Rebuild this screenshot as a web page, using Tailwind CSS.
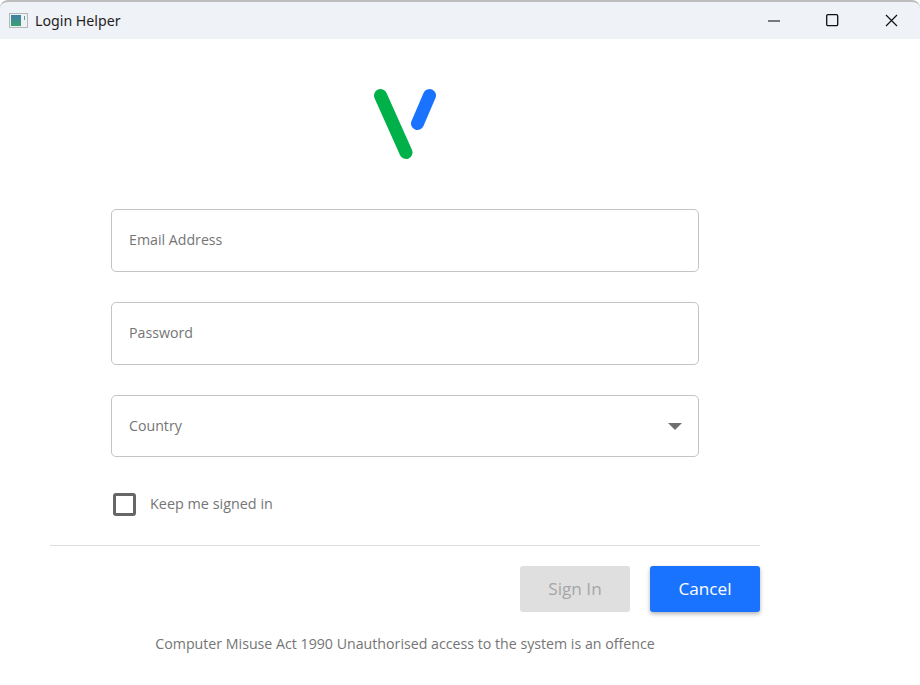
<!DOCTYPE html>
<html>
<head>
<meta charset="utf-8">
<script src="https://cdn.jsdelivr.net/npm/@tailwindcss/browser@4"></script>
</head>
<body class="bg-white font-['Open_Sans','Noto_Sans',sans-serif]">
<div class="w-[920px] h-[685px] overflow-hidden flex flex-col bg-white">
  <header class="h-[39px] shrink-0 flex items-center bg-[#eff2f7] border-t-2 border-[#bdbdbd] rounded-t-[8px] pl-[9px]">
    <svg width="19" height="15" viewBox="0 0 19 15" class="shrink-0">
      <defs><linearGradient id="g" x1="0" y1="0" x2="0" y2="1"><stop offset="0" stop-color="#3f7fa8"/><stop offset="1" stop-color="#3c9f72"/></linearGradient></defs>
      <rect x="0.5" y="0.5" width="18" height="14" fill="#eef1f4" stroke="#b4b8bc"/>
      <rect x="2" y="2" width="10" height="11" fill="url(#g)"/>
      <rect x="15" y="3" width="1" height="4" fill="#5aa09a"/>
    </svg>
    <span class="ml-[7px] pt-[2px] text-[14.2px] leading-none text-[#1f1f1f] font-['Noto_Sans',sans-serif]">Login Helper</span>
    <div class="ml-auto flex items-center h-full">
      <div class="w-[58px] flex justify-center">
        <svg width="12" height="2" viewBox="0 0 12 2"><path d="M0 1H12" stroke="#000" stroke-width="1"/></svg>
      </div>
      <div class="w-[59px] flex justify-center">
        <svg width="13" height="13" viewBox="0 0 13 13"><rect x="0.7" y="0.7" width="11" height="11" rx="1.2" fill="none" stroke="#111" stroke-width="1.3"/></svg>
      </div>
      <div class="w-[58px] flex justify-center">
        <svg width="13" height="13" viewBox="0 0 13 13"><path d="M1 1L12 12M12 1L1 12" stroke="#111" stroke-width="1.2"/></svg>
      </div>
    </div>
  </header>

  <main class="flex flex-col items-center w-[810px]">
    <svg width="64" height="72" viewBox="0 0 64 72" class="mt-[49px] shrink-0">
      <line x1="7.5" y1="7.5" x2="33" y2="64.5" stroke="#00b14a" stroke-width="13" stroke-linecap="round"/>
      <line x1="56.5" y1="7.5" x2="44.5" y2="35.5" stroke="#1a73ff" stroke-width="13" stroke-linecap="round"/>
    </svg>

    <div class="w-[588px] mt-[49px] flex flex-col gap-[30px] text-[14.2px] text-[#757575]">
      <div class="h-[63px] border border-[#c4c4c4] rounded-[5px] flex items-center px-[17px] pb-[2px]">Email Address</div>
      <div class="h-[63px] border border-[#c4c4c4] rounded-[5px] flex items-center px-[17px] pb-[2px]">Password</div>
      <div class="h-[62px] border border-[#c4c4c4] rounded-[5px] flex items-center justify-between pl-[17px] pr-[16px]">
        <span>Country</span>
        <svg width="14" height="7" viewBox="0 0 14 7"><path d="M0 0H14L7 7Z" fill="#707070"/></svg>
      </div>
    </div>

    <div class="w-[588px] mt-[35px] flex items-center text-[14.4px] text-[#757575] h-[24px]">
      <span class="ml-[2px] w-[23px] h-[23px] border-[3px] border-[#666] rounded-[3px] shrink-0"></span>
      <span class="ml-[14px]">Keep me signed in</span>
    </div>

    <div class="w-[710px] mt-[29px] border-t border-[#dedede]"></div>

    <div class="w-[710px] mt-[20px] flex justify-end gap-[20px] text-[17.2px]">
      <button class="w-[110px] h-[46px] rounded-[3px] bg-[#dfdfdf] text-[#a6a6a6]">Sign In</button>
      <button class="w-[110px] h-[46px] rounded-[3px] bg-[#1a73ff] text-white shadow-[0_2px_4px_rgba(0,0,0,0.3)]">Cancel</button>
    </div>

    <p class="mt-[22px] text-[14.2px] leading-5 text-[#757575] whitespace-nowrap">Computer Misuse Act 1990 Unauthorised access to the system is an offence</p>
  </main>
</div>
</body>
</html>
